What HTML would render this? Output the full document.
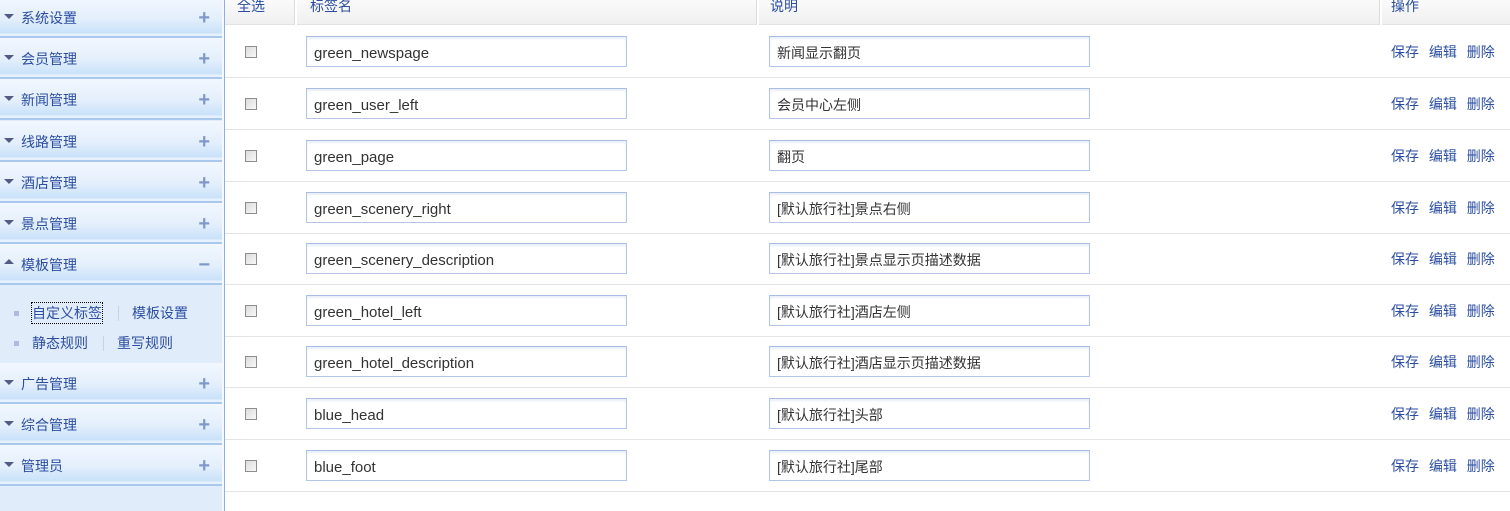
<!DOCTYPE html>
<html><head><meta charset="utf-8"><style>
*{margin:0;padding:0;box-sizing:border-box}
body{width:1510px;height:511px;overflow:hidden;background:#fff;font-family:"Liberation Sans","Noto Sans CJK SC",sans-serif;font-size:14px;color:#2b4ea0;position:relative}
#side{position:absolute;left:0;top:0;width:222px;height:511px;background:#e1ecfa}
#sb{position:absolute;left:222px;top:0;width:2px;height:511px;background:#f4f8fe}
#sl{position:absolute;left:224px;top:0;width:1px;height:511px;background:#8eaee0}
.h{position:absolute;left:0;width:222px;height:41px;background:linear-gradient(#f2f7fe 0%,#e4effc 55%,#c9e2fa 92%,#e6f1fd 95%);border-bottom:2px solid #a9c8ee}
.h span{position:absolute;left:21px;top:11px;font-size:14px}
.h i{position:absolute;left:4px;top:17px;width:0;height:0;border-left:5px solid transparent;border-right:5px solid transparent;border-top:5px solid #545a86}
.h i.up{border-top:0;border-bottom:5px solid #545a86;top:15px}
.h b{position:absolute;right:12px;top:11px;font-weight:bold;font-size:20px;color:#7f98cc;line-height:20px}
.sub{position:absolute;font-size:14px}
.dot{position:absolute;width:5px;height:5px;background:#b4b8dc}
.sep{position:absolute;width:1px;height:15px;background:#c8d2e2}
#th{position:absolute;left:225px;top:0;width:1285px;height:25px;background:linear-gradient(#fafafa,#f0f0f0);border-bottom:1px solid #e2e2e2}
.th{position:absolute;top:-4px;font-size:14px}
.cs{position:absolute;top:0;width:3px;height:25px;border-left:1px solid #dcdcdc;border-right:2px solid #fff}
.row{position:absolute;left:225px;width:1285px;height:52px;border-bottom:1px solid #e4e4e4}
.cb{position:absolute;left:20px;top:20px;width:12px;height:12px;border:1px solid #8e8e8e;background:linear-gradient(135deg,#dcdcdc,#f8f8f8)}
.in{position:absolute;top:10px;height:31px;width:321px;border:1px solid #b3c6e8;border-top-color:#a9bde4;box-shadow:inset 0 2px 2px #e8eef8;color:#333;font-size:15px;padding:8px 0 0 7px}
.in.c{font-size:14px;padding-top:6px}
.ops{position:absolute;left:1166px;top:16px;font-size:14px;word-spacing:6px}
</style></head><body>
<div id="side"></div><div id="sb"></div><div id="sl"></div>
<div class="h" style="top:-3px"><i></i><span>系统设置</span><b>+</b></div>
<div class="h" style="top:38px"><i></i><span>会员管理</span><b>+</b></div>
<div class="h" style="top:79px"><i></i><span>新闻管理</span><b>+</b></div>
<div class="h" style="top:121px"><i></i><span>线路管理</span><b>+</b></div>
<div class="h" style="top:162px"><i></i><span>酒店管理</span><b>+</b></div>
<div class="h" style="top:203px"><i></i><span>景点管理</span><b>+</b></div>
<div class="h" style="top:244px"><i class="up"></i><span>模板管理</span><b>−</b></div>
<div class="dot" style="left:14px;top:311px"></div>
<div class="sub" style="left:32px;top:303px;outline:1px dotted #000">自定义标签</div>
<div class="sep" style="left:118px;top:306px"></div>
<div class="sub" style="left:132px;top:303px">模板设置</div>
<div class="dot" style="left:14px;top:341px"></div>
<div class="sub" style="left:32px;top:333px">静态规则</div>
<div class="sep" style="left:103px;top:336px"></div>
<div class="sub" style="left:117px;top:333px">重写规则</div>
<div class="h" style="top:363px"><i></i><span>广告管理</span><b>+</b></div>
<div class="h" style="top:404px"><i></i><span>综合管理</span><b>+</b></div>
<div class="h" style="top:445px"><i></i><span>管理员</span><b>+</b></div>

<div id="th">
<div class="th" style="left:12px">全选</div>
<div class="cs" style="left:69px"></div>
<div class="th" style="left:85px">标签名</div>
<div class="cs" style="left:531px"></div>
<div class="th" style="left:545px">说明</div>
<div class="cs" style="left:1154px"></div>
<div class="th" style="left:1166px">操作</div>
</div>

<div class="row" style="top:26px"><div class="cb"></div><div class="in" style="left:81px">green_newspage</div><div class="in c" style="left:544px">新闻显示翻页</div><div class="ops">保存 编辑 删除</div></div>
<div class="row" style="top:78px"><div class="cb"></div><div class="in" style="left:81px">green_user_left</div><div class="in c" style="left:544px">会员中心左侧</div><div class="ops">保存 编辑 删除</div></div>
<div class="row" style="top:130px"><div class="cb"></div><div class="in" style="left:81px">green_page</div><div class="in c" style="left:544px">翻页</div><div class="ops">保存 编辑 删除</div></div>
<div class="row" style="top:182px"><div class="cb"></div><div class="in" style="left:81px">green_scenery_right</div><div class="in c" style="left:544px">[默认旅行社]景点右侧</div><div class="ops">保存 编辑 删除</div></div>
<div class="row" style="top:233px"><div class="cb"></div><div class="in" style="left:81px">green_scenery_description</div><div class="in c" style="left:544px">[默认旅行社]景点显示页描述数据</div><div class="ops">保存 编辑 删除</div></div>
<div class="row" style="top:285px"><div class="cb"></div><div class="in" style="left:81px">green_hotel_left</div><div class="in c" style="left:544px">[默认旅行社]酒店左侧</div><div class="ops">保存 编辑 删除</div></div>
<div class="row" style="top:336px"><div class="cb"></div><div class="in" style="left:81px">green_hotel_description</div><div class="in c" style="left:544px">[默认旅行社]酒店显示页描述数据</div><div class="ops">保存 编辑 删除</div></div>
<div class="row" style="top:388px"><div class="cb"></div><div class="in" style="left:81px">blue_head</div><div class="in c" style="left:544px">[默认旅行社]头部</div><div class="ops">保存 编辑 删除</div></div>
<div class="row" style="top:440px"><div class="cb"></div><div class="in" style="left:81px">blue_foot</div><div class="in c" style="left:544px">[默认旅行社]尾部</div><div class="ops">保存 编辑 删除</div></div>
</body></html>
